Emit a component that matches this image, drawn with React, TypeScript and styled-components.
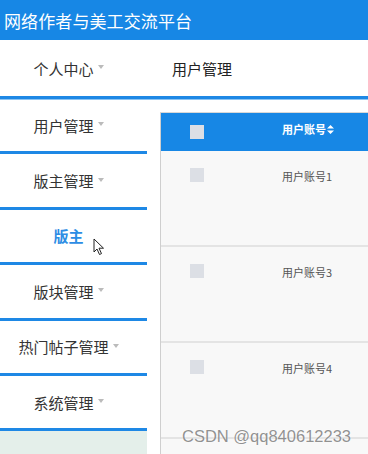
import React from "react";
import styled, { createGlobalStyle } from "styled-components";

const Global = createGlobalStyle`
  html, body { margin: 0; padding: 0; overflow: hidden; background: #fff; }
  body { font-family: "Noto Sans CJK SC", "Liberation Sans", sans-serif; }
`;

const Page = styled.div`
  position: relative;
  width: 368px;
  height: 454px;
  display: flex;
  flex-direction: column;
  overflow: hidden;
`;

const Header = styled.header`
  height: 40px;
  flex: none;
  background: #1787e5;
  color: #fff;
  display: flex;
  align-items: center;
  padding-left: 4px;
  font-size: 17px;
  letter-spacing: 0.1px;
`;

const TopNav = styled.nav`
  height: 56px;
  flex: none;
  display: flex;
  align-items: center;
  border-bottom: 3px solid #1e88e5;
  box-shadow: 0 1px 0 #8cc4f3;
`;

const NavCell = styled.div`
  width: 137px;
  display: flex;
  justify-content: center;
  align-items: center;
  font-size: 15px;
  color: #333;
`;

const NavLink = styled.div`
  margin-left: 35px;
  font-size: 15px;
  color: #222;
`;

const Caret = styled.span`
  display: inline-block;
  width: 0;
  height: 0;
  margin-left: 4px;
  border-left: 3.5px solid transparent;
  border-right: 3.5px solid transparent;
  border-top: 4px solid #bbb;
  transform: translateY(-1px);
`;

const Main = styled.div`
  flex: 1;
  display: flex;
  min-height: 0;
`;

const Sidebar = styled.aside`
  width: 147px;
  flex: none;
  display: flex;
  flex-direction: column;
`;

const SideItem = styled.div<{ $active?: boolean }>`
  height: 52.4px;
  flex: none;
  border-bottom: 3px solid #1e88e5;
  display: flex;
  align-items: center;
  justify-content: center;
  padding-right: 10px;
  font-size: 15px;
  color: ${(p) => (p.$active ? "#2d8de4" : "#333")};
  font-weight: ${(p) => (p.$active ? 700 : 400)};
`;

const SideFill = styled.div`
  flex: 1;
  background: #e4efea;
`;

const Content = styled.section`
  flex: 1;
  padding: 13px 0 0 13px;
  min-width: 0;
`;

const Table = styled.div`
  border-left: 1px solid #cfcfcf;
  border-top: 1px solid #d8d8d8;
  height: 100%;
  background: #f8f8f8;
`;

const HeadRow = styled.div`
  height: 38px;
  background: #1787e5;
  display: grid;
  grid-template-columns: 121px 1fr;
  align-items: start;
`;

const Row = styled.div`
  height: 94px;
  border-bottom: 2px solid #e4e4e4;
  display: grid;
  grid-template-columns: 121px 1fr;
  align-items: start;
`;

const Check = styled.span<{ $top: number }>`
  display: block;
  width: 14px;
  height: 14px;
  margin: ${(p) => p.$top}px 0 0 29px;
  background: #dcdfe5;
`;

const HeadText = styled.div`
  margin-top: 8px;
  color: #fff;
  font-size: 11px;
  font-weight: 700;
  display: flex;
  align-items: center;
  line-height: 16px;
`;

const CellText = styled.div`
  margin-top: 16px;
  color: #555;
  font-size: 11px;
  line-height: 18px;
`;

const Watermark = styled.div`
  position: absolute;
  left: 182px;
  top: 427px;
  font-family: "Liberation Sans", Arial, sans-serif;
  font-size: 16.5px;
  color: rgba(110, 110, 110, 0.75);
  text-shadow: 0 0 2px rgba(255, 255, 255, 0.9);
  white-space: nowrap;
`;

const Cursor = styled.svg`
  position: absolute;
  left: 93px;
  top: 238px;
`;

const SortIcon = () => (
  <svg width="7" height="9" viewBox="0 0 7 9" style={{ marginLeft: 1 }}>
    <path d="M3.5 0 L7 3.6 H0 Z M3.5 9 L0 5.4 H7 Z" fill="#fff" />
  </svg>
);

const rows = ["用户账号1", "用户账号3", "用户账号4"];

export default function App() {
  return (
    <Page>
      <Global />
      <Header>网络作者与美工交流平台</Header>
      <TopNav>
        <NavCell>
          个人中心<Caret />
        </NavCell>
        <NavLink>用户管理</NavLink>
      </TopNav>
      <Main>
        <Sidebar>
          <SideItem>用户管理<Caret /></SideItem>
          <SideItem>版主管理<Caret /></SideItem>
          <SideItem $active>版主</SideItem>
          <SideItem>版块管理<Caret /></SideItem>
          <SideItem>热门帖子管理<Caret /></SideItem>
          <SideItem>系统管理<Caret /></SideItem>
          <SideFill />
        </Sidebar>
        <Content>
          <Table>
            <HeadRow>
              <Check $top={12} />
              <HeadText>
                用户账号
                <SortIcon />
              </HeadText>
            </HeadRow>
            {rows.map((r) => (
              <Row key={r}>
                <Check $top={17} />
                <CellText>{r}</CellText>
              </Row>
            ))}
          </Table>
        </Content>
      </Main>
      <Cursor width="12" height="18" viewBox="0 0 12 18">
        <path
          d="M1 1 L1 14 L4 11 L6.5 16.5 L8.5 15.6 L6 10.2 L10.5 10.2 Z"
          fill="#fff"
          stroke="#222"
          strokeWidth="1"
          strokeLinejoin="round"
        />
      </Cursor>
      <Watermark>CSDN @qq840612233</Watermark>
    </Page>
  );
}
